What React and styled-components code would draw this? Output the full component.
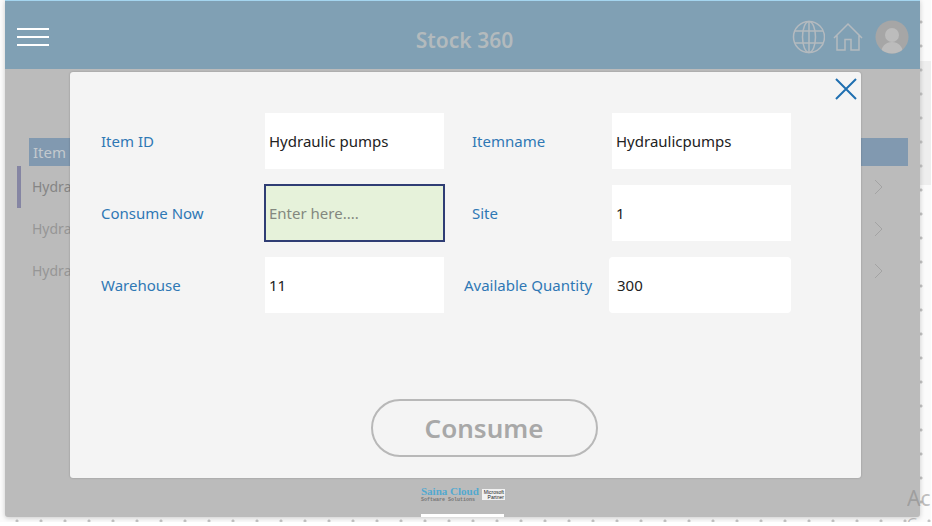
import React, { useState } from "react";
import styled, { createGlobalStyle } from "styled-components";

const COLORS = {
  HEADER: "#80a0b4",
  HEADER_LINE: "#a4d5ef",
  DIMMED: "#bbbbbb",
  DIMMED_ICON: "#b4babf",
  TABLE_HEAD: "#8199b0",
  PANEL: "#f4f4f4",
  BLUE: "#2f78b4",
  NAVY: "#2f3d74",
  GREEN: "#e6f2da",
  DISABLED: "#a8a8a8",
};

const leftFields = [
  { id: "item-id", label: "Item ID", value: "Hydraulic pumps" },
  { id: "consume-now", label: "Consume Now", value: "", active: true },
  { id: "warehouse", label: "Warehouse", value: "11" },
];

const rightFields = [
  { id: "item-name", label: "Itemname", value: "Hydraulicpumps" },
  { id: "site", label: "Site", value: "1" },
  { id: "quantity", label: "Available Quantity", value: "300", wide: true },
];

const rows = [
  { id: 1, name: "Hydra", selected: true },
  { id: 2, name: "Hydra" },
  { id: 3, name: "Hydra" },
];

const Field = ({ id, label, value, active, wide, inset }) => {
  const [text, setText] = useState(value);
  return (
    <FieldRow $inset={inset && !wide}>
      <Label htmlFor={id}>{label}</Label>
      <Input
        id={id}
        value={text}
        placeholder={active ? "Enter here...." : undefined}
        onChange={(ev) => setText(ev.target.value)}
        $active={active}
        $wide={wide}
      />
    </FieldRow>
  );
};

const GlobeIcon = () => (
  <svg width="34" height="34" viewBox="0 0 34 34" fill="none" stroke="currentColor" strokeWidth="1.5">
    <circle cx="18" cy="17" r="15.5" />
    <ellipse cx="18" cy="17" rx="6.5" ry="15.5" />
    <path d="M18 1.5v31M4 11h28M4 23h28" />
  </svg>
);

const HomeIcon = () => (
  <svg width="30" height="30" viewBox="0 0 30 30" fill="none" stroke="currentColor" strokeWidth="1.5">
    <path d="M1 16L15 2l14 14M4 13.5V28h8V17.5h6V28h8V13.5" />
  </svg>
);

const AvatarIcon = () => (
  <svg width="34" height="34" viewBox="0 0 34 34">
    <clipPath id="avatar-clip">
      <circle cx="17" cy="17" r="16.5" />
    </clipPath>
    <circle cx="17" cy="17" r="16.5" fill="#a6a6a6" />
    <g clipPath="url(#avatar-clip)" fill="#bcbcbc">
      <circle cx="17" cy="15" r="7" />
      <path d="M6 34c0-8 5-12 11-12s11 4 11 12z" />
    </g>
  </svg>
);

const Logo = () => (
  <svg width="86" height="18" viewBox="0 0 86 18" role="img" aria-label="Saina Cloud">
    <text x="1" y="9" fontFamily="Liberation Serif, serif" fontWeight="bold" fontSize="11" fill="#52a9d0">
      Saina Cloud
    </text>
    <text x="1" y="15" fontFamily="Liberation Mono, monospace" fontSize="5" fontWeight="bold" fill="#777">
      Software Solutions
    </text>
    <rect x="62" y="3" width="23" height="11" fill="#f2f2f2" />
    <text x="84" y="8" textAnchor="end" fontFamily="Liberation Sans, sans-serif" fontSize="5" fill="#222">
      Microsoft
    </text>
    <text x="84" y="13" textAnchor="end" fontFamily="Liberation Sans, sans-serif" fontSize="5" fill="#222">
      Partner
    </text>
  </svg>
);

const App = () => {
  return (
    <Page>
      <GlobalStyle />
      <Screen>
        <Header>
          <IconButton aria-label="Menu" $light>
            <svg width="34" height="20" viewBox="0 0 34 20" stroke="currentColor" strokeWidth="2">
              <path d="M1 2h32M1 10h32M1 18h32" />
            </svg>
          </IconButton>
          <Title>Stock 360</Title>
          <HeaderIcons>
            <IconButton aria-label="Language">
              <GlobeIcon />
            </IconButton>
            <IconButton aria-label="Home">
              <HomeIcon />
            </IconButton>
            <IconButton aria-label="Account">
              <AvatarIcon />
            </IconButton>
          </HeaderIcons>
        </Header>

        <Main>
          <Table>
            <thead>
              <tr>
                <MarkerCell as="th" />
                <HeadCell>Item</HeadCell>
                <HeadCell />
              </tr>
            </thead>
            <tbody>
              {rows.map((row) => (
                <tr key={row.id}>
                  <MarkerCell $selected={row.selected} />
                  <Cell $selected={row.selected}>{row.name}</Cell>
                  <ArrowCell>
                    <svg width="9" height="16" viewBox="0 0 9 16" fill="none" stroke="#a3a3a3">
                      <path d="M1 1l7 7-7 7" />
                    </svg>
                  </ArrowCell>
                </tr>
              ))}
            </tbody>
          </Table>
        </Main>

        <Footer>
          <Logo />
          <FooterBar />
        </Footer>

        <Dialog role="dialog" aria-label="Consume">
          <CloseButton aria-label="Close">
            <svg width="22" height="22" viewBox="0 0 22 22" stroke="currentColor" strokeWidth="2">
              <path d="M1 1l20 20M21 1L1 21" />
            </svg>
          </CloseButton>
          <Form>
            <Stack>
              {leftFields.map((field) => (
                <Field key={field.id} {...field} />
              ))}
            </Stack>
            <Stack>
              {rightFields.map((field) => (
                <Field key={field.id} {...field} inset />
              ))}
            </Stack>
          </Form>
          <Actions>
            <ConsumeButton disabled>Consume</ConsumeButton>
          </Actions>
        </Dialog>
      </Screen>
      <Watermark>
        <WatermarkTitle>Ac</WatermarkTitle>
        <WatermarkText>G</WatermarkText>
      </Watermark>
    </Page>
  );
};

export default App;

const GlobalStyle = createGlobalStyle`
  * {
    box-sizing: border-box;
  }

  body {
    margin: 0;
    background: white;
    font-family: "Noto Sans", "Open Sans", sans-serif;
  }

  button, input {
    font-family: inherit;
  }
`;

// dotted canvas shows along the right and bottom edges only
const Page = styled.div`
  position: relative;
  overflow: hidden;
  min-height: calc(100vh - 4px);
  margin-right: 1px;
  padding: 0 11px 5px 5px;
  background-color: #fbfbfb;
  background-image: radial-gradient(circle, #c4c4c4 1px, transparent 2px),
    radial-gradient(circle, #c4c4c4 1px, transparent 2px),
    linear-gradient(transparent 61px, #eeeeee 61px, #eeeeee 185px, transparent 185px);
  background-size: 24px 24px, 24px 24px, 12px 100%;
  background-position: right -2px top 10px, left 5px bottom -11px, right top;
  background-repeat: repeat-y, repeat-x, no-repeat;
`;

const Screen = styled.div`
  position: relative;
  display: flex;
  flex-direction: column;
  min-height: calc(100vh - 9px);
  background: ${COLORS.DIMMED};
  border-top: 1px solid ${COLORS.HEADER_LINE};
  border-radius: 0 0 3px 3px;
  box-shadow: 0 1px 5px rgba(0, 0, 0, 0.2);
`;

const Header = styled.header`
  display: grid;
  grid-template-columns: 1fr auto 1fr;
  align-items: center;
  height: 68px;
  padding: 4px 11px 0;
  background: ${COLORS.HEADER};
`;

const Title = styled.h1`
  margin: 6px 0 0 4px;
  font-size: 21px;
  line-height: 28px;
  font-weight: 600;
  color: #b3babd;
`;

const HeaderIcons = styled.div`
  display: flex;
  align-items: center;
  justify-content: flex-end;
  gap: 8px;

  button:last-child {
    margin-left: 4px;
  }
`;

const IconButton = styled.button`
  display: flex;
  justify-self: start;
  padding: 0;
  border: none;
  background: none;
  color: ${(props) => (props.$light ? "white" : COLORS.DIMMED_ICON)};
`;

const Main = styled.main`
  flex: 1;
  padding: 69px 12px 0;
`;

const Table = styled.table`
  width: 100%;
  border-spacing: 0;
  font-size: 14px;
  line-height: 20px;
`;

const MarkerCell = styled.td`
  width: 12px;
  padding: 0;
  box-shadow: ${(props) => (props.$selected ? "inset 4px 0 #8585a3" : "none")};
`;

const HeadCell = styled.th`
  height: 28px;
  padding: 0 4px;
  background: ${COLORS.TABLE_HEAD};
  color: #c3c9ce;
  font-size: 15px;
  font-weight: 400;
  text-align: left;
`;

const Cell = styled.td`
  height: 42px;
  padding: 0 3px;
  color: ${(props) => (props.$selected ? "#858585" : "#969696")};
`;

const ArrowCell = styled.td`
  width: 40px;
  padding: 0 6px;

  svg {
    display: block;
  }
`;

const Footer = styled.footer`
  display: flex;
  flex-direction: column;
  align-items: center;
  gap: 10px;
`;

const FooterBar = styled.div`
  width: 83px;
  height: 3px;
  background: white;
`;

const Dialog = styled.section`
  position: absolute;
  top: 71px;
  left: 65px;
  right: 59px;
  padding: 41px 70px 21px 31px;
  background: ${COLORS.PANEL};
  border-radius: 3px;
  box-shadow: 0 0 2px rgba(0, 0, 0, 0.25);
`;

const CloseButton = styled.button`
  position: absolute;
  top: 6px;
  right: 4px;
  display: flex;
  padding: 0;
  border: none;
  background: none;
  color: #1f6fb0;
`;

const Form = styled.form`
  display: grid;
  grid-template-columns: 343fr 327fr;
  gap: 20px;
`;

const Stack = styled.div`
  display: flex;
  flex-direction: column;
  gap: 16px;
`;

const FieldRow = styled.div`
  display: flex;
  align-items: center;
  justify-content: space-between;
  padding-left: ${(props) => (props.$inset ? "8px" : "0")};
`;

const Label = styled.label`
  color: ${COLORS.BLUE};
  font-size: 15px;
  line-height: 20px;
  white-space: nowrap;
`;

const Input = styled.input`
  width: ${(props) => (props.$wide ? "182px" : "179px")};
  height: 56px;
  padding: 0 ${(props) => (props.$wide ? "8px" : "4px")};
  border: none;
  border-radius: ${(props) => (props.$wide ? "4px" : "0")};
  outline: ${(props) => (props.$active ? `2px solid ${COLORS.NAVY}` : "none")};
  outline-offset: -1px;
  background: ${(props) => (props.$active ? COLORS.GREEN : "white")};
  color: #222222;
  font-size: 15px;

  &::placeholder {
    color: #83887f;
  }
`;

const Actions = styled.div`
  display: flex;
  justify-content: center;
  margin-top: 86px;
  padding-left: 76px;
`;

const ConsumeButton = styled.button`
  width: 227px;
  height: 58px;
  border: 2px solid #b8b8b8;
  border-radius: 29px;
  background: none;
  color: ${COLORS.DISABLED};
  font-size: 26px;
  font-weight: 600;
`;

const Watermark = styled.div`
  position: absolute;
  right: 0;
  bottom: -10px;
  width: 24px;
  overflow: hidden;
  color: rgba(130, 130, 130, 0.5);
`;

const WatermarkTitle = styled.div`
  font-size: 21px;
  line-height: 28px;
`;

const WatermarkText = styled.div`
  font-size: 15px;
  line-height: 20px;
`;
